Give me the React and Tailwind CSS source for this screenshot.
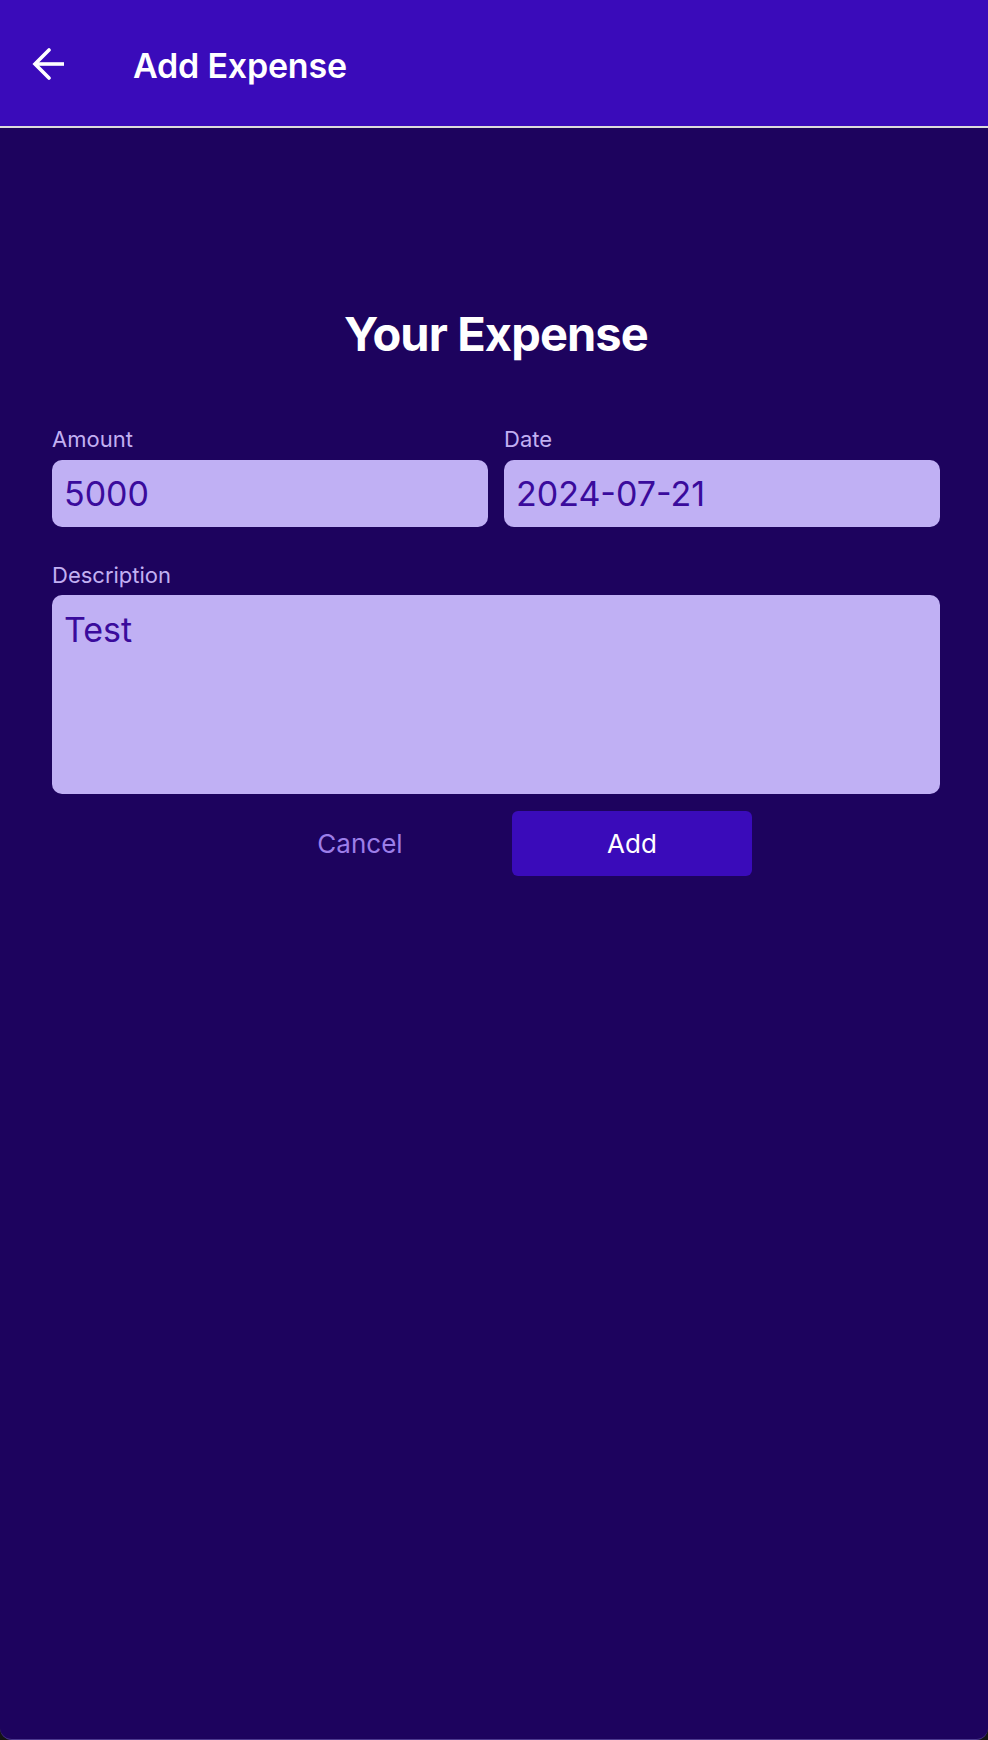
import React, { useState } from 'react';

export default function App() {
  const [amount, setAmount] = useState('5000');
  const [date, setDate] = useState('2024-07-21');
  const [description, setDescription] = useState('Test');

  return (
    <div className="h-[1740px] w-full bg-[#141414] font-['Inter',_'Noto_Sans',_sans-serif]">
      <div className="flex h-[1740px] flex-col overflow-hidden rounded-b-[12px] border-b border-[#4d3a8e] bg-[#1d035e]">
        <header className="flex h-[128px] shrink-0 items-center border-b-2 border-[#dcdcdc] bg-[#3a0bba] pl-[32px]">
          <button className="flex h-[34px] w-[34px] items-center justify-center text-white">
            <svg width="34" height="34" viewBox="0 0 34 34" fill="none" stroke="currentColor" strokeWidth="3.6">
              <path d="M3 18H32" />
              <path d="M17 4L3 18L17 32" strokeLinecap="round" />
            </svg>
          </button>
          <h1 className="ml-[67px] pt-[4px] text-[34px] font-semibold tracking-[-0.2px] text-white">Add Expense</h1>
        </header>

        <main className="flex flex-col pl-[52px] pr-[48px] pt-[182px]">
          <h2 className="text-center text-[47px] font-bold leading-[48px] tracking-[-0.9px] text-white">Your Expense</h2>

          <div className="mt-[67px] grid grid-cols-2 gap-[16px]">
            <div className="flex flex-col">
              <label className="text-[22px] leading-[28px] text-[#c2b0f2]">Amount</label>
              <input
                type="text"
                value={amount}
                onChange={(e) => setAmount(e.target.value)}
                className="mt-[7px] h-[67px] w-full rounded-[10px] bg-[#c0b0f4] px-[12px] text-[34px] text-[#3a0b9c] outline-none"
              />
            </div>
            <div className="flex flex-col">
              <label className="text-[22px] leading-[28px] text-[#c2b0f2]">Date</label>
              <input
                type="text"
                value={date}
                onChange={(e) => setDate(e.target.value)}
                className="mt-[7px] h-[67px] w-full rounded-[10px] bg-[#c0b0f4] px-[12px] text-[34px] text-[#3a0b9c] outline-none"
              />
            </div>
          </div>

          <div className="mt-[34px] flex flex-col">
            <label className="text-[22px] leading-[28px] text-[#c2b0f2]">Description</label>
            <textarea
              value={description}
              onChange={(e) => setDescription(e.target.value)}
              className="mt-[6px] h-[199px] w-full resize-none rounded-[10px] bg-[#c0b0f4] px-[12px] pt-[14px] text-[34px] leading-[41px] text-[#3a0b9c] outline-none"
            />
          </div>

          <div className="mt-[17px] flex justify-center gap-[32px]">
            <button className="h-[65px] w-[240px] rounded-[6px] text-[26px] text-[#9c7ee8]">Cancel</button>
            <button className="h-[65px] w-[240px] rounded-[6px] bg-[#3a0bba] text-[26px] text-white">Add</button>
          </div>
        </main>
      </div>
    </div>
  );
}
